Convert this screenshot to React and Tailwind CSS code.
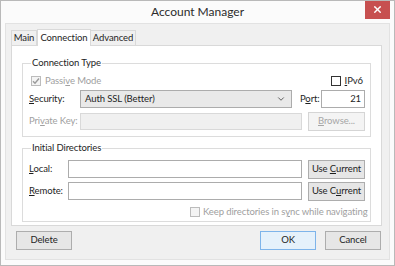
import { ChevronDown, X } from "lucide-react";

function Check({ checked, disabled }) {
  return (
    <div className={`w-[10px] h-[10px] border flex items-center justify-center shrink-0 ${disabled ? "border-[#bcbcbc] bg-[#f4f4f4]" : "border-[#333] bg-white"}`}>
      {checked && (
        <svg width="8" height="8" viewBox="0 0 8 8">
          <path d="M1 4.2 L3 6.2 L7 1.5" fill="none" stroke={disabled ? "#9a9a9a" : "#222"} strokeWidth="1.4" />
        </svg>
      )}
    </div>
  );
}

function Btn({ children, w, disabled, primary, className = "" }) {
  return (
    <div
      className={`h-[19px] flex items-center justify-center border shrink-0 whitespace-nowrap ${w} ${className} ${
        disabled
          ? "border-[#d5d5d5] bg-[#f4f4f4] text-[#a6a6a6]"
          : primary
          ? "border-[#7eb4ea] bg-[#e5f1fb] text-[#1e1e1e]"
          : "border-[#adadad] bg-[#e6e6e6] text-[#1e1e1e]"
      }`}
    >
      {children}
    </div>
  );
}

function Group({ title, className, children }) {
  return (
    <fieldset className={`border border-[#dcdcdc] ml-[10px] w-[349px] min-w-0 pl-[6px] pr-[5px] ${className}`}>
      <legend className="ml-[2px] px-[1px] leading-[14px]">{title}</legend>
      {children}
    </fieldset>
  );
}

export default function App() {
  return (
    <div className="w-[395px] h-[266px] bg-[#fbfbfb] border border-[#b9b9b9] flex flex-col font-['Lato',sans-serif] text-[9.5px] tracking-[-0.1px] text-[#1e1e1e] overflow-hidden whitespace-nowrap">
      <div className="relative h-[22px] flex items-center justify-center shrink-0">
        <span className="text-[12px] tracking-normal text-[#2b2b2b]">Account Manager</span>
        <div className="absolute right-[4px] top-[-1px] w-[25px] h-[19px] bg-[#c75050] flex items-center justify-center">
          <X size={11} color="#fff" strokeWidth={3} />
        </div>
      </div>

      <div className="mx-[4px] h-[237px] bg-[#f0f0f0] border border-[#e2e2e2] pl-[5px] pt-[5px]">
        {/* tabs */}
        <div className="flex items-end h-[16px]">
          <div className="w-[26px] h-[15px] border border-b-0 border-[#d9d9d9] bg-[#f0f0f0] flex items-center justify-center">Main</div>
          <div className="relative z-10 w-[54px] h-[17px] -mb-px border border-b-0 border-[#d9d9d9] bg-white flex items-center justify-center">Connection</div>
          <div className="w-[45px] h-[15px] border border-b-0 border-l-0 border-[#d9d9d9] bg-[#f0f0f0] flex items-center justify-center">Advanced</div>
        </div>

        {/* panel */}
        <div className="w-[371px] h-[181px] bg-white border border-[#d9d9d9] pt-[10px]">
          <Group title="Connection Type" className="pt-[4px] pb-[6px]">
            <div className="flex items-center h-[14px]">
              <div className="ml-[2px]"><Check checked disabled /></div>
              <span className="ml-[4px] text-[#a0a0a0]">Passi<u>v</u>e Mode</span>
              <div className="ml-auto flex items-center mr-[2px]">
                <Check />
                <span className="ml-[4px]"><u>I</u>Pv6</span>
              </div>
            </div>
            <div className="flex items-center h-[18px] mt-[2px]">
              <span className="w-[51px]"><u>S</u>ecurity:</span>
              <div className="w-[212px] h-[18px] border border-[#acacac] bg-[#e9e9e9] flex items-center pl-[4px] pr-[5px]">
                <span>Auth SSL (Better)</span>
                <ChevronDown size={10} className="ml-auto text-[#444]" strokeWidth={2} />
              </div>
              <span className="ml-[8px]">P<u>o</u>rt:</span>
              <div className="ml-auto w-[44px] h-[18px] border border-[#acacac] bg-white flex items-center justify-end pr-[3px]">21</div>
            </div>
            <div className="flex items-center h-[18px] mt-[4px]">
              <span className="w-[51px] text-[#a0a0a0]">Pri<u>v</u>ate Key:</span>
              <div className="w-[222px] h-[17px] border border-[#d9d9d9] bg-[#f0f0f0]" />
              <Btn w="w-[57px]" disabled className="ml-auto">
                <span><u>B</u>rowse...</span>
              </Btn>
            </div>
          </Group>

          <Group title="Initial Directories" className="mt-[4px] pt-[5px] pb-[3px]">
            <div className="flex items-center h-[18px]">
              <span className="w-[39px]"><u>L</u>ocal:</span>
              <div className="w-[234px] h-[18px] border border-[#acacac] bg-white" />
              <Btn w="w-[57px]" className="ml-auto">
                <span>Use <u>C</u>urrent</span>
              </Btn>
            </div>
            <div className="flex items-center h-[18px] mt-[4px]">
              <span className="w-[39px]"><u>R</u>emote:</span>
              <div className="w-[234px] h-[18px] border border-[#acacac] bg-white" />
              <Btn w="w-[57px]" className="ml-auto">
                <span>Use C<u>u</u>rrent</span>
              </Btn>
            </div>
            <div className="flex items-center h-[12px] mt-[6px] pl-[161px]">
              <Check disabled />
              <span className="ml-[3px] text-[#a0a0a0]">Keep directories in s<u>y</u>nc while navigating</span>
            </div>
          </Group>
        </div>

        {/* bottom buttons */}
        <div className="flex items-center mt-[5px] pr-[8px]">
          <Btn w="w-[56px]" className="ml-[5px]">Delete</Btn>
          <Btn w="w-[56px]" primary className="ml-auto">OK</Btn>
          <Btn w="w-[56px]" className="ml-[9px]">Cancel</Btn>
        </div>
      </div>
    </div>
  );
}
